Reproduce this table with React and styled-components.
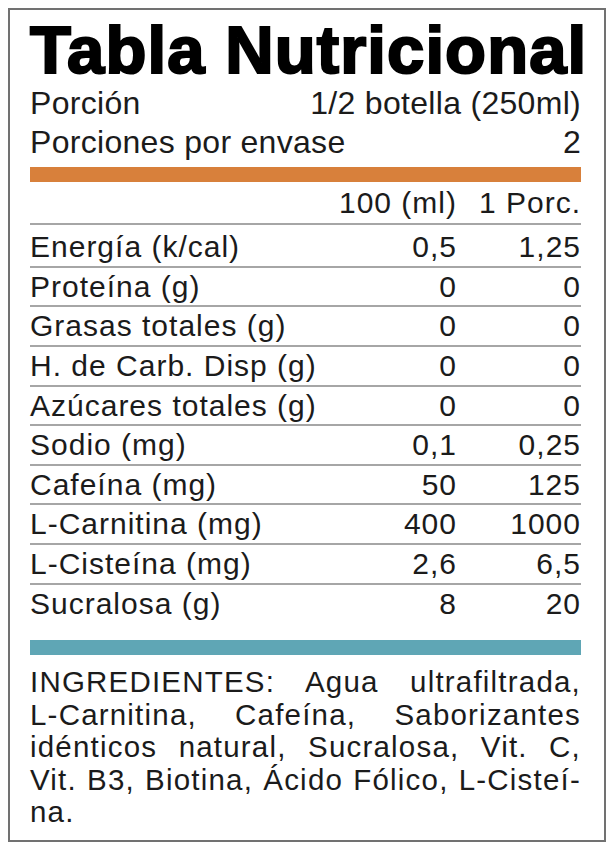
import styled, { createGlobalStyle } from "styled-components";

const GlobalStyle = createGlobalStyle`
  body {
    margin: 8px;
    background: #ffffff;
    font-family: "Liberation Sans", Arial, sans-serif;
    color: #1b1b1b;
  }
`;

const Label = styled.div`
  width: 598px;
  height: 834px;
  box-sizing: border-box;
  border: 2px solid #717171;
  padding: 6px 23px 0 20px;
  display: flex;
  flex-direction: column;
`;

const Title = styled.h1`
  margin: 0 0 1px;
  font-size: 67px;
  line-height: 67px;
  font-weight: 700;
  color: #000;
  -webkit-text-stroke: 2.2px #000;
  letter-spacing: 1.1px;
  white-space: nowrap;
`;

const InfoRow = styled.div`
  display: flex;
  justify-content: space-between;
  font-size: 32px;
  line-height: 39px;
  letter-spacing: 0.3px;
`;

const Bar = styled.div`
  height: 15px;
  background: ${(p) => p.color};
  margin-top: ${(p) => p.gap}px;
`;

const Table = styled.div`
  display: flex;
  flex-direction: column;
`;

const Row = styled.div`
  display: grid;
  grid-template-columns: 1fr 130px 124px;
  font-size: 30px;
  line-height: ${(p) => (p.head ? "41.2px" : "37.6px")};
  padding-top: ${(p) => (p.first ? "3.5px" : "0")};
  letter-spacing: 1px;
  border-bottom: ${(p) => (p.last ? "none" : "2px solid #a6a6a6")};
`;

const Cell = styled.span`
  text-align: ${(p) => (p.num ? "right" : "left")};
  white-space: nowrap;
`;

const Ingredients = styled.p`
  margin: 11.8px 0 0;
  font-size: 29.5px;
  line-height: 32.5px;
  letter-spacing: 1.2px;
  text-align: justify;
  text-align-last: justify;
`;

const rows = [
  ["Energía (k/cal)", "0,5", "1,25"],
  ["Proteína (g)", "0", "0"],
  ["Grasas totales (g)", "0", "0"],
  ["H. de Carb. Disp (g)", "0", "0"],
  ["Azúcares totales (g)", "0", "0"],
  ["Sodio (mg)", "0,1", "0,25"],
  ["Cafeína (mg)", "50", "125"],
  ["L-Carnitina (mg)", "400", "1000"],
  ["L-Cisteína (mg)", "2,6", "6,5"],
  ["Sucralosa (g)", "8", "20"],
];

export default function App() {
  return (
    <>
      <GlobalStyle />
      <Label>
        <Title>Tabla Nutricional</Title>
        <InfoRow>
          <span>Porción</span>
          <span>1/2 botella (250ml)</span>
        </InfoRow>
        <InfoRow>
          <span>Porciones por envase</span>
          <span>2</span>
        </InfoRow>
        <Bar color="#d8803b" gap={4.6} />
        <Table>
          <Row head>
            <Cell />
            <Cell num>100 (ml)</Cell>
            <Cell num>1 Porc.</Cell>
          </Row>
          {rows.map(([name, a, b], i) => (
            <Row key={name} first={i === 0} last={i === rows.length - 1}>
              <Cell>{name}</Cell>
              <Cell num>{a}</Cell>
              <Cell num>{b}</Cell>
            </Row>
          ))}
        </Table>
        <Bar color="#5fa6b5" gap={17.3} />
        <Ingredients>
          INGREDIENTES: Agua ultrafiltrada,
          <br />
          L-Carnitina, Cafeína, Saborizantes
          <br />
          idénticos natural, Sucralosa, Vit. C,
          <br />
          Vit. B3, Biotina, Ácido Fólico, L-Cisteí-
          <br />
          na.
        </Ingredients>
      </Label>
    </>
  );
}
